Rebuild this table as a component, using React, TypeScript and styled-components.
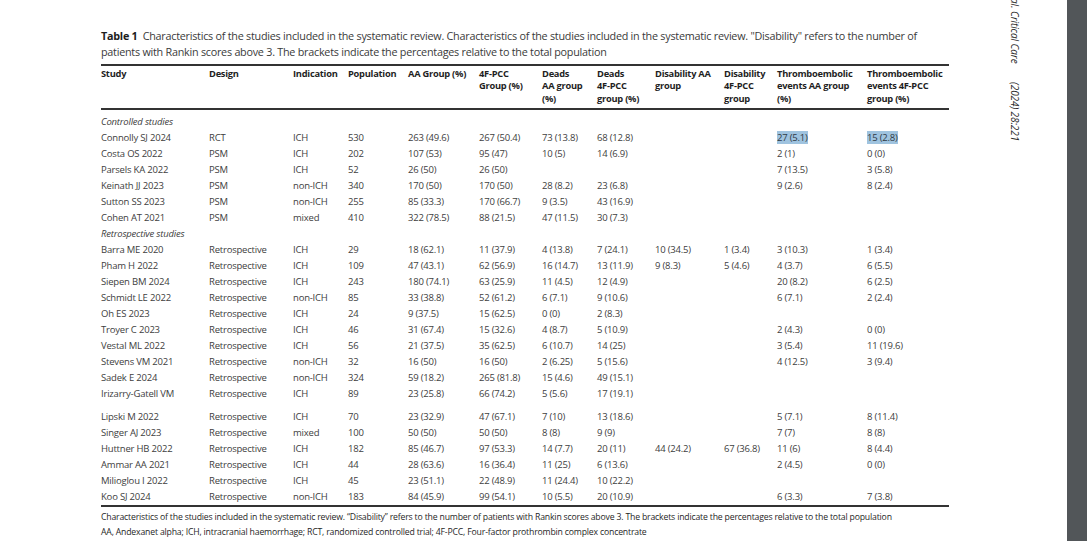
import React from 'react';
import styled, { createGlobalStyle } from 'styled-components';

const GlobalStyle = createGlobalStyle`
  html, body {
    margin: 0;
    padding: 0;
    background: #525659;
    overflow: hidden;
  }
`;

const Viewer = styled.div`
  display: flex;
  width: 1087px;
  height: 541px;
  background: #525659;
`;

const Page = styled.div`
  display: flex;
  width: 1067px;
  height: 541px;
  background: #ffffff;
  overflow: hidden;
  font-family: 'Open Sans', 'Noto Sans', sans-serif;
`;

const Content = styled.div`
  display: flex;
  flex-direction: column;
  width: 848px;
  padding: 28px 0 0 101px;
`;

const Caption = styled.p`
  margin: 0 0 5px;
  max-width: 828px;
  font-size: 10.8px;
  line-height: 15.5px;
  color: #3a3a3a;
  letter-spacing: -0.25px;
`;

const CaptionLabel = styled.b`
  color: #1d1d1d;
  font-weight: 700;
`;

const Table = styled.table`
  width: 848px;
  border-collapse: collapse;
  table-layout: fixed;
  border-top: 2px solid #333;
  border-bottom: 2px solid #333;
`;

const HeadCell = styled.th`
  padding: 2px 0 3px;
  text-align: left;
  vertical-align: top;
  font-size: 9.3px;
  line-height: 12.4px;
  font-weight: 700;
  color: #1f1f1f;
  letter-spacing: -0.25px;
  border-bottom: 2px solid #333;
  white-space: nowrap;
`;

const Row = styled.tr<{ $gap?: number }>`
  height: ${p => 16 + (p.$gap || 0)}px;
  td {
    padding-top: ${p => p.$gap || 0}px;
  }
`;

const Cell = styled.td`
  padding: 0;
  font-size: 9.5px;
  line-height: 16px;
  color: #404040;
  letter-spacing: -0.2px;
  white-space: nowrap;
  vertical-align: middle;
`;

const GroupCell = styled(Cell)`
  font-style: italic;
`;

const Mark = styled.span`
  background: #9fc3df;
  color: #2f3a44;
`;

const Notes = styled.div`
  padding-top: 3px;
  font-size: 8.7px;
  line-height: 15px;
  color: #1f1f1f;
  letter-spacing: -0.18px;
`;

const RunningHead = styled.div`
  margin-left: auto;
  margin-right: 45px;
  margin-top: -2px;
  writing-mode: vertical-rl;
  font-size: 10px;
  font-style: italic;
  color: #2a2a2a;
  white-space: nowrap;
  letter-spacing: -0.1px;
  span + span {
    margin-top: 18px;
  }
`;

const widths = [108, 84, 55, 60, 71, 63, 55, 58, 69, 53, 90, 82];

const headers: React.ReactNode[] = [
  'Study',
  'Design',
  'Indication',
  'Population',
  'AA Group (%)',
  <>4F-PCC<br />Group (%)</>,
  <>Deads<br />AA group<br />(%)</>,
  <>Deads<br />4F-PCC<br />group (%)</>,
  <>Disability AA<br />group</>,
  <>Disability<br />4F-PCC<br />group</>,
  <>Thromboembolic<br />events AA group<br />(%)</>,
  <>Thromboembolic<br />events 4F-PCC<br />group (%)</>,
];

type Study = string[];

const controlled: Study[] = [
  ['Connolly SJ 2024', 'RCT', 'ICH', '530', '263 (49.6)', '267 (50.4)', '73 (13.8)', '68 (12.8)', '', '', '*27 (5.1)', '*15 (2.8)'],
  ['Costa OS 2022', 'PSM', 'ICH', '202', '107 (53)', '95 (47)', '10 (5)', '14 (6.9)', '', '', '2 (1)', '0 (0)'],
  ['Parsels KA 2022', 'PSM', 'ICH', '52', '26 (50)', '26 (50)', '', '', '', '', '7 (13.5)', '3 (5.8)'],
  ['Keinath JJ 2023', 'PSM', 'non-ICH', '340', '170 (50)', '170 (50)', '28 (8.2)', '23 (6.8)', '', '', '9 (2.6)', '8 (2.4)'],
  ['Sutton SS 2023', 'PSM', 'non-ICH', '255', '85 (33.3)', '170 (66.7)', '9 (3.5)', '43 (16.9)', '', '', '', ''],
  ['Cohen AT 2021', 'PSM', 'mixed', '410', '322 (78.5)', '88 (21.5)', '47 (11.5)', '30 (7.3)', '', '', '', ''],
];

const retrospective: Study[] = [
  ['Barra ME 2020', 'Retrospective', 'ICH', '29', '18 (62.1)', '11 (37.9)', '4 (13.8)', '7 (24.1)', '10 (34.5)', '1 (3.4)', '3 (10.3)', '1 (3.4)'],
  ['Pham H 2022', 'Retrospective', 'ICH', '109', '47 (43.1)', '62 (56.9)', '16 (14.7)', '13 (11.9)', '9 (8.3)', '5 (4.6)', '4 (3.7)', '6 (5.5)'],
  ['Siepen BM 2024', 'Retrospective', 'ICH', '243', '180 (74.1)', '63 (25.9)', '11 (4.5)', '12 (4.9)', '', '', '20 (8.2)', '6 (2.5)'],
  ['Schmidt LE 2022', 'Retrospective', 'non-ICH', '85', '33 (38.8)', '52 (61.2)', '6 (7.1)', '9 (10.6)', '', '', '6 (7.1)', '2 (2.4)'],
  ['Oh ES 2023', 'Retrospective', 'ICH', '24', '9 (37.5)', '15 (62.5)', '0 (0)', '2 (8.3)', '', '', '', ''],
  ['Troyer C 2023', 'Retrospective', 'ICH', '46', '31 (67.4)', '15 (32.6)', '4 (8.7)', '5 (10.9)', '', '', '2 (4.3)', '0 (0)'],
  ['Vestal ML 2022', 'Retrospective', 'ICH', '56', '21 (37.5)', '35 (62.5)', '6 (10.7)', '14 (25)', '', '', '3 (5.4)', '11 (19.6)'],
  ['Stevens VM 2021', 'Retrospective', 'non-ICH', '32', '16 (50)', '16 (50)', '2 (6.25)', '5 (15.6)', '', '', '4 (12.5)', '3 (9.4)'],
  ['Sadek E 2024', 'Retrospective', 'non-ICH', '324', '59 (18.2)', '265 (81.8)', '15 (4.6)', '49 (15.1)', '', '', '', ''],
  ['Irizarry-Gatell VM', 'Retrospective', 'ICH', '89', '23 (25.8)', '66 (74.2)', '5 (5.6)', '17 (19.1)', '', '', '', ''],
  ['Lipski M 2022', 'Retrospective', 'ICH', '70', '23 (32.9)', '47 (67.1)', '7 (10)', '13 (18.6)', '', '', '5 (7.1)', '8 (11.4)'],
  ['Singer AJ 2023', 'Retrospective', 'mixed', '100', '50 (50)', '50 (50)', '8 (8)', '9 (9)', '', '', '7 (7)', '8 (8)'],
  ['Huttner HB 2022', 'Retrospective', 'ICH', '182', '85 (46.7)', '97 (53.3)', '14 (7.7)', '20 (11)', '44 (24.2)', '67 (36.8)', '11 (6)', '8 (4.4)'],
  ['Ammar AA 2021', 'Retrospective', 'ICH', '44', '28 (63.6)', '16 (36.4)', '11 (25)', '6 (13.6)', '', '', '2 (4.5)', '0 (0)'],
  ['Milioglou I 2022', 'Retrospective', 'ICH', '45', '23 (51.1)', '22 (48.9)', '11 (24.4)', '10 (22.2)', '', '', '', ''],
  ['Koo SJ 2024', 'Retrospective', 'non-ICH', '183', '84 (45.9)', '99 (54.1)', '10 (5.5)', '20 (10.9)', '', '', '6 (3.3)', '7 (3.8)'],
];

// a leading * means the cell text is selected (blue highlight in the viewer)
const renderCell = (value: string, i: number) => (
  <Cell key={i}>{value.startsWith('*') ? <Mark>{value.slice(1)}</Mark> : value}</Cell>
);

const StudyRows = ({ rows }: { rows: Study[] }) => (
  <>
    {rows.map((r) => (
      <Row key={r[0]} $gap={r[0] === 'Lipski M 2022' ? 7 : 0}>
        {r.map(renderCell)}
      </Row>
    ))}
  </>
);

export default function App() {
  return (
    <>
      <GlobalStyle />
      <Viewer>
        <Page>
          <Content>
            <Caption>
              <CaptionLabel>Table 1</CaptionLabel>{'\u2002'}Characteristics of the studies included in the systematic review. Characteristics of the studies included in the systematic review. "Disability" refers to the number of patients with Rankin scores above 3. The brackets indicate the percentages relative to the total population
            </Caption>
            <Table>
              <colgroup>
                {widths.map((w, i) => (
                  <col key={i} style={{ width: w }} />
                ))}
              </colgroup>
              <thead>
                <tr>
                  {headers.map((h, i) => (
                    <HeadCell key={i}>{h}</HeadCell>
                  ))}
                </tr>
              </thead>
              <tbody>
                <Row $gap={4}>
                  <GroupCell colSpan={12}>Controlled studies</GroupCell>
                </Row>
                <StudyRows rows={controlled} />
                <Row>
                  <GroupCell colSpan={12}>Retrospective studies</GroupCell>
                </Row>
                <StudyRows rows={retrospective} />
              </tbody>
            </Table>
            <Notes>
              <div>Characteristics of the studies included in the systematic review. “Disability” refers to the number of patients with Rankin scores above 3. The brackets indicate the percentages relative to the total population</div>
              <div>AA, Andexanet alpha; ICH, intracranial haemorrhage; RCT, randomized controlled trial; 4F-PCC, Four-factor prothrombin complex concentrate</div>
            </Notes>
          </Content>
          <RunningHead>
            <span>al. Critical Care</span>
            <span>(2024) 28:221</span>
          </RunningHead>
        </Page>
      </Viewer>
    </>
  );
}
